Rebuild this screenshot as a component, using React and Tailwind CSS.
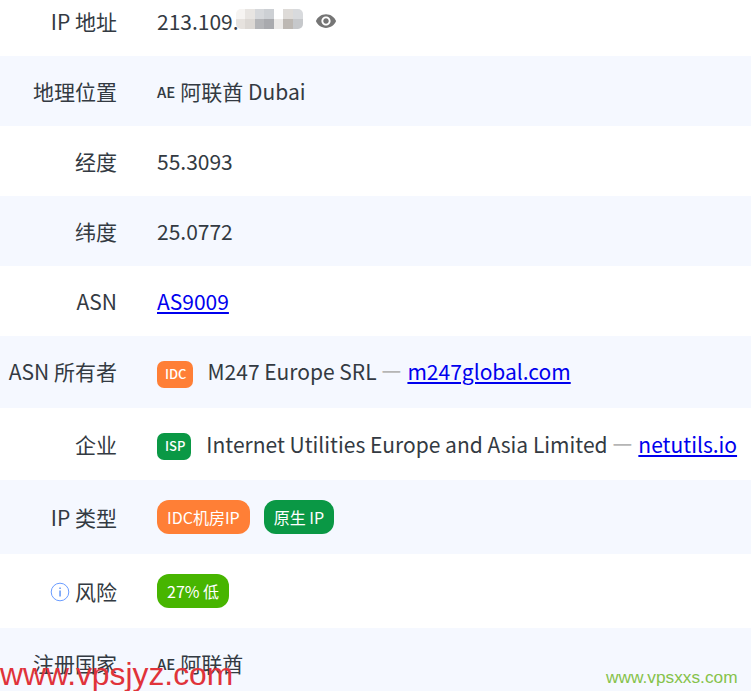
import React from 'react'
import { MdRemoveRedEye } from 'react-icons/md'

const Row = ({ label, blue, className = 'h-[70px]', children }) => (
  <div className={`flex items-center ${blue ? 'bg-[#f5f8ff]' : 'bg-white'} ${className}`}>
    <div className="w-[117px] pt-[2px] shrink-0 text-right whitespace-nowrap flex items-center justify-end gap-[5px]">{label}</div>
    <div className="ml-10 flex items-center whitespace-nowrap">{children}</div>
  </div>
)

const Tag = ({ className, children }) => (
  <span className={`${className} text-white text-[13px] font-medium rounded-[7px] h-[27px] pl-[8px] pr-[6px] flex items-center`}>{children}</span>
)

const Pill = ({ color, children }) => (
  <span className={`${color} text-white text-[16px] rounded-[12px] h-[34px] px-[10px] flex items-center`}>{children}</span>
)

const Link = ({ children }) => <a href="#" className="text-[#0000ee] underline">{children}</a>

const Text = ({ children }) => <span className="pt-[2px]">{children}</span>

const Dash = () => <span className="text-[#b5b5b5] text-[22px] font-medium ml-[5px] mr-[6px] -translate-y-[3px]">—</span>

const Flag = () => <span className="text-[15px] font-medium mr-[5px] mt-[3px]">AE</span>

const mosaic = [
  '#f6f4f2', '#e8e5e2', '#d6d8db', '#cdd0d4', '#ffffff', '#dedbd8', '#d8dadd',
  '#e6e2de', '#dcd8d4', '#b4b5b8', '#a9aaae', '#eceae8', '#bdb8b3', '#c6c8cb',
]

const App = () => {
  return (
    <div className="relative h-[691px] w-[751px] overflow-hidden bg-white text-[21px] text-[#333a42] font-['Noto_Sans_CJK_SC','Noto_Sans',sans-serif]">
      <Row label="IP 地址" className="h-[56px] pb-[14px]">
        <Text>213.109.</Text>
        <span className="grid grid-cols-7 w-[67px] h-[20px] -ml-[3px] -mt-[4px] rounded-[5px] overflow-hidden">
          {mosaic.map((c, i) => <span key={i} style={{ backgroundColor: c }} />)}
        </span>
        <MdRemoveRedEye size={22} className="ml-[12px] text-[#757575]" />
      </Row>
      <Row label="地理位置" blue>
        <Flag /><Text>阿联酋 Dubai</Text>
      </Row>
      <Row label="经度"><Text>55.3093</Text></Row>
      <Row label="纬度" blue><Text>25.0772</Text></Row>
      <Row label="ASN"><Text><Link>AS9009</Link></Text></Row>
      <Row label="ASN 所有者" blue className="h-[72px] pb-[2px]">
        <Tag className="bg-[#ff7f36] mt-[6px]">IDC</Tag>
        <span className="ml-[15px] pt-[2px]">M247 Europe SRL</span><Dash /><Text><Link>m247global.com</Link></Text>
      </Row>
      <Row label="企业" className="h-[72px]">
        <Tag className="bg-[#0a9845] mt-[4px]">ISP</Tag>
        <span className="ml-[15px] pt-[2px]">Internet Utilities Europe and Asia Limited</span><Dash /><Text><Link>netutils.io</Link></Text>
      </Row>
      <Row label="IP 类型" blue className="h-[74px]">
        <Pill color="bg-[#ff7f36]">IDC机房IP</Pill>
        <span className="w-[14px]" />
        <Pill color="bg-[#0a9845]">原生 IP</Pill>
      </Row>
      <Row
        label={
          <>
            <svg width="20" height="20" viewBox="0 0 20 20" fill="none">
              <circle cx="10" cy="10" r="8.8" stroke="#6a9cff" strokeWidth="1" />
              <rect x="9.4" y="8.5" width="1.3" height="6" fill="#4a86f5" />
              <rect x="9.4" y="5.5" width="1.3" height="1.5" fill="#4a86f5" />
            </svg>
            风险
          </>
        }
        className="h-[74px]"
      >
        <Pill color="bg-[#47b500]">27% 低</Pill>
      </Row>
      <Row label="注册国家" blue className="h-[70px]">
        <Flag /><Text>阿联酋</Text>
      </Row>
      <div className="absolute left-0 top-[652px] text-[31.8px] leading-[44px] text-[#e0333a] font-['Liberation_Sans',sans-serif]">www.vpsjyz.com</div>
      <div className="absolute left-[606px] top-[665px] text-[17.3px] leading-[24px] text-[#86c24a] font-['Liberation_Sans',sans-serif]">www.vpsxxs.com</div>
    </div>
  )
}

export default App
